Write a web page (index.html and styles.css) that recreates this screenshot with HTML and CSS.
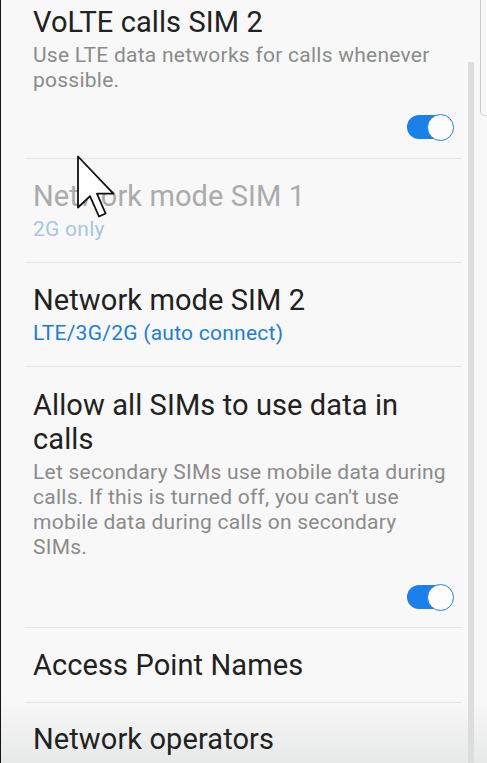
FILE: index.html
```html
<!DOCTYPE html>
<html>
<head>
<meta charset="utf-8">
<link rel="stylesheet" href="styles.css">
</head>
<body>
<div class="screen">
  <div class="list">
    <div class="item first">
      <div class="title">VoLTE calls SIM 2</div>
      <div class="sub">Use LTE data networks for calls whenever possible.</div>
      <div class="switch-row"><span class="toggle"><span class="knob"></span></span></div>
    </div>
    <div class="item">
      <div class="title disabled">Network mode SIM 1</div>
      <div class="sub value-disabled">2G only</div>
    </div>
    <div class="item">
      <div class="title">Network mode SIM 2</div>
      <div class="sub value">LTE/3G/2G (auto connect)</div>
    </div>
    <div class="item tall">
      <div class="title">Allow all SIMs to use data in calls</div>
      <div class="sub">Let secondary SIMs use mobile data during calls. If this is turned off, you can't use mobile data during calls on secondary SIMs.</div>
      <div class="switch-row lower"><span class="toggle"><span class="knob"></span></span></div>
    </div>
    <div class="item">
      <div class="title">Access Point Names</div>
    </div>
    <div class="item last">
      <div class="title">Network operators</div>
    </div>
  </div>
  <div class="scroll"><div class="thumb"></div></div>
  <div class="side"><div class="side-card"></div></div>
  <svg class="cursor" width="40" height="66" viewBox="-0.5 -0.5 13 22">
    <path d="M0 0 L0 17 L4 13.2 L7 20 L9.2 19 L6.3 12.4 L11.8 12.4 Z" fill="#fff" stroke="#111" stroke-width="0.6" stroke-linejoin="round"/>
  </svg>
</div>
</body>
</html>
```
FILE: styles.css
```css
html, body {
  margin: 0;
  padding: 0;
  height: 100%;
  overflow: hidden;
}
body {
  background: linear-gradient(to bottom, #f7f8f7 0, #f7f8f7 700px, #e7e8e8 763px);
  font-family: Roboto, "Noto Sans", sans-serif;
}
.screen {
  position: relative;
  display: flex;
  height: 763px;
  border-left: 1px solid #151515;
}
.list {
  width: 467px;
  display: flex;
  flex-direction: column;
}
.item {
  margin: 0 6px 0 24px;
  padding: 20px 14px 20px 8px;
  border-bottom: 1px solid #e3e4e3;
}
.item.first {
  padding-top: 5px;
  padding-bottom: 19px;
}
.item.tall {
  padding-top: 21px;
  padding-bottom: 18px;
}
.item.last {
  border-bottom: none;
  padding-top: 19px;
}
.title {
  font-size: 29px;
  line-height: 34px;
  letter-spacing: 0.1px;
  color: #212121;
}
.title.disabled {
  color: #ababab;
}
.sub {
  margin-top: 4px;
  font-size: 21px;
  line-height: 25px;
  letter-spacing: 0.25px;
  color: #8b8b8b;
}
.sub.value {
  color: #1b7fd6;
}
.sub.value-disabled {
  color: #a9c5e4;
}
.switch-row {
  display: flex;
  justify-content: flex-end;
  margin-top: 22px;
  margin-right: -5px;
}
.switch-row.lower {
  margin-top: 25px;
}
.toggle {
  display: inline-flex;
  align-items: center;
  justify-content: flex-end;
  width: 46px;
  height: 24px;
  border-radius: 12px;
  background: #1a80ea;
}
.knob {
  width: 27px;
  height: 27px;
  box-sizing: border-box;
  border-radius: 50%;
  background: #fdfdfd;
  border: 1.5px solid #2a7ee0;
  margin-right: -0.5px;
}
.scroll {
  width: 6px;
  padding-top: 62px;
  display: flex;
  justify-content: flex-start;
}
.thumb {
  width: 4px;
  flex: 1;
  background: #dcdddc;
}
.side {
  flex: 1;
  padding-left: 6px;
}
.side-card {
  height: 115px;
  border-left: 1px solid #c9c9c9;
  border-bottom: 1px solid #d4d4d4;
  border-bottom-left-radius: 5px;
}
.cursor {
  position: absolute;
  left: 75px;
  top: 155px;
}
```
